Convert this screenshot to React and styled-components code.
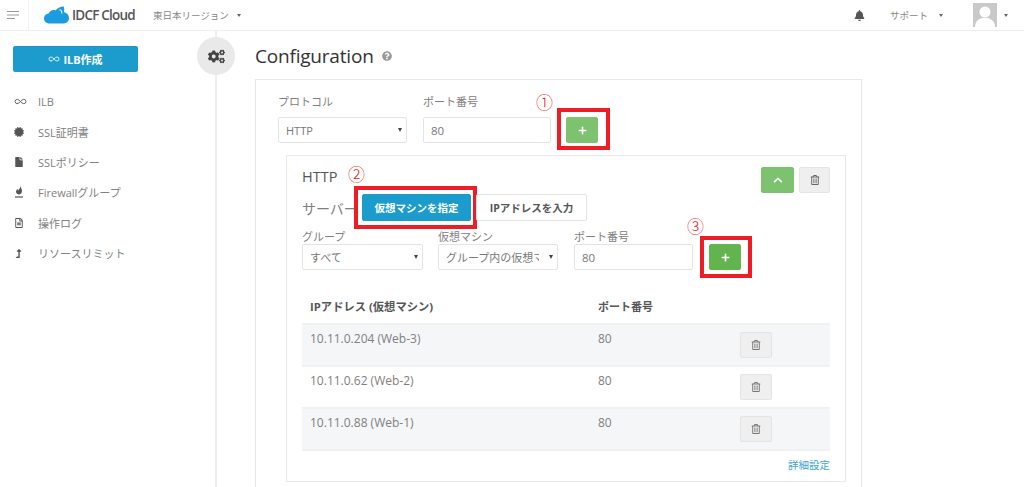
import React from "react";
import styled, { createGlobalStyle } from "styled-components";
import {
  FaBell,
  FaCertificate,
  FaChevronUp,
  FaCogs,
  FaFile,
  FaLevelUpAlt,
  FaPlus,
  FaQuestionCircle,
  FaRegFileAlt,
  FaRegTrashAlt,
} from "react-icons/fa";
import { Infinity as InfinityIcon } from "lucide-react";

const GlobalStyle = createGlobalStyle`
  html, body {
    margin: 0;
    height: 487px;
    overflow: hidden;
    background: #fff;
    font-family: "Open Sans", "Noto Sans CJK JP", sans-serif;
    color: #888;
    font-size: 12px;
  }
  * { box-sizing: border-box; }
`;

const TopBar = styled.header`
  height: 31px;
  display: flex;
  align-items: center;
  border-bottom: 1px solid #eee;
`;
const MenuCell = styled.div`
  width: 29px;
  height: 30px;
  border-right: 1px solid #f0f0f0;
  display: flex;
  align-items: center;
  padding-left: 7px;
`;
const Logo = styled.div`
  display: flex;
  align-items: center;
  gap: 3px;
  margin-left: 15px;
  width: 109px;
`;
const LogoText = styled.span`
  font-size: 13.5px;
  font-weight: 600;
  letter-spacing: -0.8px;
  color: #555;
`;
const TopText = styled.span`
  font-size: 9.5px;
  color: #888;
  margin-left: ${(p) => p.$gap || 0}px;
`;
const Caret = styled.span`
  display: inline-block;
  width: 0;
  height: 0;
  margin-left: ${(p) => p.$gap || 0}px;
  border-left: 2.5px solid transparent;
  border-right: 2.5px solid transparent;
  border-top: 3px solid #666;
`;
const TopRight = styled.div`
  margin-left: auto;
  display: flex;
  align-items: center;
  padding-right: 16px;
`;
const Avatar = styled.div`
  width: 24px;
  height: 24px;
  margin-left: 30px;
  background: #c9c9c9;
  overflow: hidden;
`;

const Body = styled.div`
  display: flex;
  height: 456px;
`;
const Sidebar = styled.aside`
  position: relative;
  width: 217px;
  flex: none;
  border-right: 2px solid #eee;
  padding: 15px 0 0 13px;
`;
const CreateButton = styled.div`
  width: 125px;
  height: 26px;
  background: #1b9ccd;
  border-radius: 2px;
  color: #fff;
  font-weight: 700;
  font-size: 11px;
  display: flex;
  align-items: center;
  justify-content: center;
  gap: 3px;
`;
const NavList = styled.nav`
  margin-top: 14px;
  display: flex;
  flex-direction: column;
`;
const NavItem = styled.div`
  height: 30.4px;
  display: flex;
  align-items: center;
  font-size: 11px;
  color: #808080;
`;
const NavIcon = styled.span`
  width: 25px;
  flex: none;
  display: flex;
  align-items: center;
  padding-left: 1px;
  color: #555;
`;
const CogBadge = styled.div`
  position: absolute;
  top: 6px;
  right: -20px;
  width: 38px;
  height: 38px;
  border-radius: 50%;
  background: #e9e9ea;
  color: #444;
  display: flex;
  align-items: center;
  justify-content: center;
`;

const Main = styled.main`
  flex: 1;
  padding: 11px 0 0 38px;
`;
const Title = styled.h1`
  margin: 0 0 9px;
  height: 28px;
  font-size: 19px;
  letter-spacing: -0.2px;
  font-weight: 400;
  color: #333;
  display: flex;
  align-items: center;
  gap: 8px;
`;
const OuterCard = styled.section`
  width: 607px;
  height: 408px;
  border: 1px solid #e8e8e8;
  border-bottom: none;
  padding: 14px 15px 0 22px;
`;
const Row = styled.div`
  display: flex;
  align-items: flex-end;
`;
const Field = styled.label`
  display: flex;
  flex-direction: column;
  width: ${(p) => p.$width}px;
  margin-right: ${(p) => p.$mr}px;
`;
const FieldLabel = styled.span`
  font-size: 11px;
  line-height: ${(p) => p.$lh || 16}px;
  height: ${(p) => p.$h || 23}px;
  color: #808080;
  white-space: nowrap;
`;
const SelectWrap = styled.div`
  position: relative;
  height: 26px;
`;
const Select = styled.select`
  appearance: none;
  width: 100%;
  height: 26px;
  padding: 0 18px 0 7px;
  border: 1px solid #e4e4e4;
  border-radius: 2px;
  background: #fff;
  color: #777;
  font: 11px "Open Sans", "Noto Sans CJK JP", sans-serif;
`;
const SelectCaret = styled.span`
  position: absolute;
  right: 5px;
  top: 11px;
  border-left: 2.5px solid transparent;
  border-right: 2.5px solid transparent;
  border-top: 4px solid #444;
`;
const Input = styled.input`
  width: 100%;
  height: 26px;
  padding: 0 7px;
  border: 1px solid #e4e4e4;
  border-radius: 2px;
  color: #777;
  font: 11.5px "Open Sans", sans-serif;
`;
const Marked = styled.div`
  position: relative;
  flex: none;
`;
const RedBox = styled.span`
  position: absolute;
  top: ${(p) => p.$top}px;
  left: ${(p) => p.$left}px;
  width: ${(p) => p.$width}px;
  height: ${(p) => p.$height}px;
  border: 4px solid #ee1c25;
  pointer-events: none;
`;
const Note = styled.span`
  position: absolute;
  top: ${(p) => p.$top}px;
  left: ${(p) => p.$left}px;
  font-size: 17px;
  line-height: 20px;
  color: #ee1c25;
  font-family: "Noto Sans CJK JP", sans-serif;
  font-weight: 300;
`;
const IconButton = styled.button`
  width: ${(p) => p.$width || 32}px;
  height: 26px;
  padding: 0;
  border: 1px solid ${(p) => p.$border};
  border-radius: 2px;
  background: ${(p) => p.$bg};
  color: ${(p) => p.$color || "#fff"};
  display: flex;
  align-items: center;
  justify-content: center;
`;

const InnerCard = styled.div`
  margin: 12px 0 0 8px;
  width: 560px;
  height: 327px;
  border: 1px solid #e8e8e8;
  padding: 11px 15px 0 15px;
`;
const CardHead = styled.div`
  display: flex;
  justify-content: space-between;
  height: 27px;
`;
const CardTitle = styled.div`
  position: relative;
  font-size: 14.5px;
  line-height: 20px;
  color: #555;
`;
const CardTools = styled.div`
  display: flex;
  gap: 5px;
`;
const ServerRow = styled.div`
  display: flex;
  align-items: center;
  height: 27px;
`;
const ServerLabel = styled.span`
  width: 60px;
  font-size: 14px;
  color: #808080;
  white-space: nowrap;
`;
const TabButton = styled.div`
  position: relative;
  width: ${(p) => p.$width}px;
  height: 27px;
  margin-right: ${(p) => p.$mr || 0}px;
  border: 1px solid ${(p) => (p.$active ? "#1b9ccd" : "#e4e4e4")};
  border-radius: 2px;
  background: ${(p) => (p.$active ? "#1b9ccd" : "#fff")};
  color: ${(p) => (p.$active ? "#fff" : "#555")};
  font-size: 10.5px;
  font-weight: 700;
  display: flex;
  align-items: center;
  justify-content: center;
  white-space: nowrap;
`;
const ServerForm = styled(Row)`
  margin-top: 8px;
`;
const Table = styled.div`
  margin-top: 29px;
`;
const TableRow = styled.div`
  display: grid;
  grid-template-columns: 288px 142px 32px;
  height: 42px;
  padding: 6px 0 0 8px;
  border-top: 2px solid #f0f1f2;
  background: ${(p) => (p.$shade ? "#f5f6f8" : "#fff")};
  font-size: 12px;
  line-height: 16px;
  color: #808080;
`;
const TableHead = styled.div`
  display: grid;
  grid-template-columns: 288px 142px;
  height: 24px;
  padding-left: 8px;
  font-size: 11px;
  font-weight: 700;
  line-height: 16px;
  color: #555;
`;
const AddressHead = styled.span`
  font-size: 11.3px;
`;
const TableEnd = styled.div`
  border-top: 2px solid #f0f1f2;
  text-align: right;
  padding-top: 6px;
  font-size: 10.5px;
  line-height: 16px;
  color: #3ea3cf;
`;
const RowTrash = styled(IconButton)`
  margin-top: 1px;
`;

const servers = [
  { name: "10.11.0.204 (Web-3)", port: "80", shade: true },
  { name: "10.11.0.62 (Web-2)", port: "80", shade: false },
  { name: "10.11.0.88 (Web-1)", port: "80", shade: true },
];

function FirewallIcon() {
  return (
    <svg width="10" height="12" viewBox="0 0 10 12">
      <path d="M6.5 0C6.8 2 8 3 8 5c0 2-1.4 3.4-3.2 3.4S2 7 2 5.6C2 4.4 3 3.8 3.4 3c.4.6.6 1 .8 1.4C5 3.4 6.4 2 6.5 0z" fill="#555" />
      <path d="M1 11h8" stroke="#555" strokeWidth="1.2" />
    </svg>
  );
}

const nav = [
  { icon: <InfinityIcon size={13} strokeWidth={1.6} />, label: "ILB" },
  { icon: <FaCertificate size={10} />, label: "SSL証明書" },
  { icon: <FaFile size={10} />, label: "SSLポリシー" },
  { icon: <FirewallIcon />, label: "Firewallグループ" },
  { icon: <FaRegFileAlt size={10} />, label: "操作ログ" },
  { icon: <FaLevelUpAlt size={9} />, label: "リソースリミット" },
];

function Cloud() {
  return (
    <svg width="25" height="18" viewBox="0 0 29 20">
      <path
        d="M7 20C3 20 0 17.4 0 14 0 10.8 2.4 8.6 5.4 8.2 7 4.8 10.4 3.4 13.4 4.8 15.2 2 18.6 0 23 0c.6 2.6.6 4.4.2 6.6C26.8 7.8 29 10.4 29 13.6 29 17.4 26 20 22 20z"
        fill="#1b9ce0"
      />
      <path d="M18 4c2 .4 3 2 2.6 4.4" stroke="#fff" strokeWidth="1.2" fill="none" />
    </svg>
  );
}

function Person() {
  return (
    <svg width="24" height="24" viewBox="0 0 24 24">
      <circle cx="12" cy="9" r="5.5" fill="#fff" />
      <path d="M2 24c0-6 4-8 7-9h6c3 1 7 3 7 9z" fill="#fff" />
    </svg>
  );
}

function Trash() {
  return <FaRegTrashAlt size={10} />;
}

export default function App() {
  return (
    <>
      <GlobalStyle />
      <TopBar>
        <MenuCell>
          <svg width="12" height="8" viewBox="0 0 12 8">
            <path d="M0 .5h12M0 4h12M0 7.5h8" stroke="#999" strokeWidth="1" />
          </svg>
        </MenuCell>
        <Logo>
          <Cloud />
          <LogoText>IDCF Cloud</LogoText>
        </Logo>
        <TopText>東日本リージョン</TopText>
        <Caret $gap={8} />
        <TopRight>
          <FaBell size={11} color="#555" />
          <TopText $gap={25}>サポート</TopText>
          <Caret $gap={11} />
          <Avatar>
            <Person />
          </Avatar>
          <Caret $gap={7} />
        </TopRight>
      </TopBar>
      <Body>
        <Sidebar>
          <CreateButton>
            <InfinityIcon size={12} strokeWidth={1.6} /> ILB作成
          </CreateButton>
          <NavList>
            {nav.map((item) => (
              <NavItem key={item.label}>
                <NavIcon>{item.icon}</NavIcon>
                {item.label}
              </NavItem>
            ))}
          </NavList>
          <CogBadge>
            <FaCogs size={17} />
          </CogBadge>
        </Sidebar>
        <Main>
          <Title>
            Configuration
            <FaQuestionCircle size={10} color="#999" />
          </Title>
          <OuterCard>
            <Row>
              <Field $width={129} $mr={16}>
                <FieldLabel>プロトコル</FieldLabel>
                <SelectWrap>
                  <Select defaultValue="HTTP">
                    <option>HTTP</option>
                  </Select>
                  <SelectCaret />
                </SelectWrap>
              </Field>
              <Field $width={128} $mr={15}>
                <FieldLabel>ポート番号</FieldLabel>
                <Input readOnly value="80" />
              </Field>
              <Marked>
                <Note $top={-25} $left={-30}>①</Note>
                <RedBox $top={-9} $left={-9} $width={53} $height={42} />
                <IconButton $bg="#7dc26e" $border="#7dc26e">
                  <FaPlus size={9} />
                </IconButton>
              </Marked>
            </Row>
            <InnerCard>
              <CardHead>
                <CardTitle>
                  HTTP
                  <Note $top={-3} $left={46}>②</Note>
                </CardTitle>
                <CardTools>
                  <IconButton $width={33} $bg="#7dc26e" $border="#7dc26e">
                    <FaChevronUp size={10} />
                  </IconButton>
                  <IconButton $width={31} $bg="#efefef" $border="#e4e4e4" $color="#666">
                    <Trash />
                  </IconButton>
                </CardTools>
              </CardHead>
              <ServerRow>
                <ServerLabel>サーバー</ServerLabel>
                <TabButton $active $width={109} $mr={5}>
                  <RedBox $top={-9} $left={-9} $width={123} $height={43} />
                  仮想マシンを指定
                </TabButton>
                <TabButton $width={111}>IPアドレスを入力</TabButton>
              </ServerRow>
              <ServerForm>
                <Field $width={121} $mr={15}>
                  <FieldLabel $h={15} $lh={15}>グループ</FieldLabel>
                  <SelectWrap>
                    <Select defaultValue="すべて">
                      <option>すべて</option>
                    </Select>
                    <SelectCaret />
                  </SelectWrap>
                </Field>
                <Field $width={120} $mr={16}>
                  <FieldLabel $h={15} $lh={15}>仮想マシン</FieldLabel>
                  <SelectWrap>
                    <Select defaultValue="グループ内の仮想マシン">
                      <option>グループ内の仮想マシン</option>
                    </Select>
                    <SelectCaret />
                  </SelectWrap>
                </Field>
                <Field $width={119} $mr={16}>
                  <FieldLabel $h={15} $lh={15}>ポート番号</FieldLabel>
                  <Input readOnly value="80" />
                </Field>
                <Marked>
                  <Note $top={-28} $left={-22}>③</Note>
                  <RedBox $top={-8} $left={-9} $width={52} $height={42} />
                  <IconButton $bg="#62b44f" $border="#62b44f">
                    <FaPlus size={9} />
                  </IconButton>
                </Marked>
              </ServerForm>
              <Table>
                <TableHead>
                  <AddressHead>IPアドレス (仮想マシン)</AddressHead>
                  <span>ポート番号</span>
                </TableHead>
                {servers.map((s) => (
                  <TableRow key={s.name} $shade={s.shade}>
                    <span>{s.name}</span>
                    <span>{s.port}</span>
                    <RowTrash $bg="#efefef" $border="#e4e4e4" $color="#777">
                      <Trash />
                    </RowTrash>
                  </TableRow>
                ))}
                <TableEnd>詳細設定</TableEnd>
              </Table>
            </InnerCard>
          </OuterCard>
        </Main>
      </Body>
    </>
  );
}
